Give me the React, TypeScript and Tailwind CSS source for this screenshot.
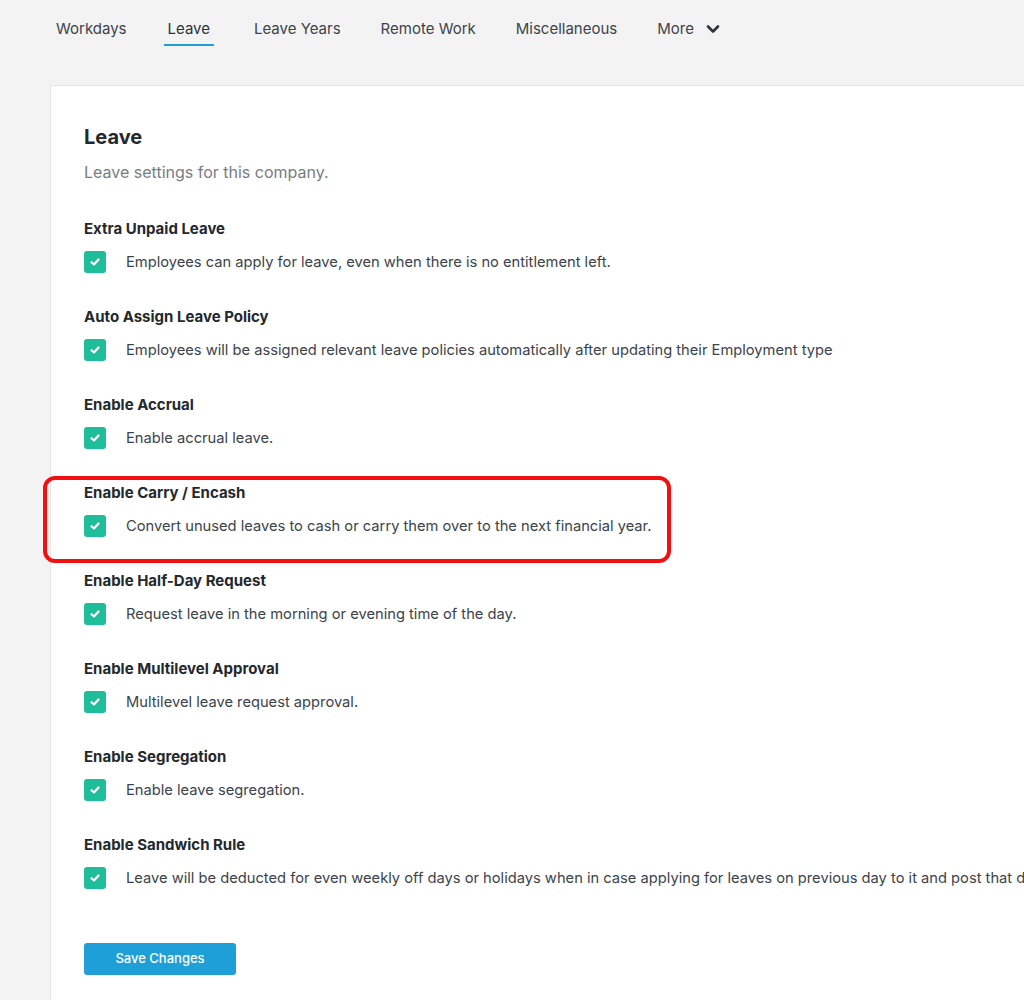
import React from 'react';

const tabs = ['Workdays', 'Leave', 'Leave Years', 'Remote Work', 'Miscellaneous'];

const settings = [
  { title: 'Extra Unpaid Leave', text: 'Employees can apply for leave, even when there is no entitlement left.' },
  { title: 'Auto Assign Leave Policy', text: 'Employees will be assigned relevant leave policies automatically after updating their Employment type' },
  { title: 'Enable Accrual', text: 'Enable accrual leave.' },
  { title: 'Enable Carry / Encash', text: 'Convert unused leaves to cash or carry them over to the next financial year.' },
  { title: 'Enable Half-Day Request', text: 'Request leave in the morning or evening time of the day.' },
  { title: 'Enable Multilevel Approval', text: 'Multilevel leave request approval.' },
  { title: 'Enable Segregation', text: 'Enable leave segregation.' },
  {
    title: 'Enable Sandwich Rule',
    text: 'Leave will be deducted for even weekly off days or holidays when in case applying for leaves on previous day to it and post that day.',
  },
];

const CheckBox: React.FC = () => (
  <span className="w-[22px] h-[22px] rounded-[3px] bg-[#1fbe9a] flex items-center justify-center shrink-0">
    <svg width="12" height="12" viewBox="0 0 12 12" fill="none">
      <path d="M2.5 6.2 L5 8.5 L9.5 3.5" stroke="white" strokeWidth="2.2" strokeLinecap="round" strokeLinejoin="round" />
    </svg>
  </span>
);

export default function App() {
  return (
    <div
      className="relative min-h-[1000px] bg-[#f3f3f3] overflow-hidden text-[#3c434a]"
      style={{ fontFamily: 'Inter, "Noto Sans", sans-serif' }}
    >
      {/* Tabs */}
      <div className="flex items-start pl-[56px] gap-[40px] text-[15px]">
        {tabs.map((t) => (
          <div
            key={t}
            className={`pt-[19px] pb-[5px] leading-[20px] border-b-2 ${
              t === 'Leave' ? '-ml-[3px] border-[#1e9fd8] px-[4px] text-[#2c3338]' : 'border-transparent'
            }`}
          >
            {t}
          </div>
        ))}
        <div className="pt-[19px] leading-[20px] flex items-center gap-[12px]">
          More
          <svg width="14" height="10" viewBox="0 0 14 10" fill="none">
            <path d="M2 2.5 L7 7.5 L12 2.5" stroke="#2c3338" strokeWidth="2.6" strokeLinecap="round" strokeLinejoin="round" />
          </svg>
        </div>
      </div>

      {/* Card */}
      <div className="ml-[50px] mt-[39px] w-[1100px] bg-white border border-[#e4e5e7] pl-[33px] pt-[37px] pb-[60px]">
        <h1 className="text-[20px] leading-[28px] font-bold text-[#23282d]">Leave</h1>
        <p className="mt-[9px] text-[16px] leading-[24px] text-[#787c82]">Leave settings for this company.</p>

        <div className="mt-[35px] flex flex-col gap-[34px]">
          {settings.map((s) => (
            <div key={s.title}>
              <div className="text-[15px] leading-[20px] font-bold text-[#23282d]">{s.title}</div>
              <div className="mt-[12px] flex items-center gap-[20px] h-[22px]">
                <CheckBox />
                <span className="text-[14.7px] whitespace-nowrap">{s.text}</span>
              </div>
            </div>
          ))}
        </div>

        <button className="mt-[54px] w-[152px] h-[32px] rounded-[3px] bg-[#1e9fd8] text-white text-[13px] font-medium">
          Save Changes
        </button>
      </div>

      {/* Annotation */}
      <div className="absolute left-[43px] top-[476px] w-[628px] h-[87px] border-[4px] border-[#f20f0f] rounded-[12px]" />
    </div>
  );
}
